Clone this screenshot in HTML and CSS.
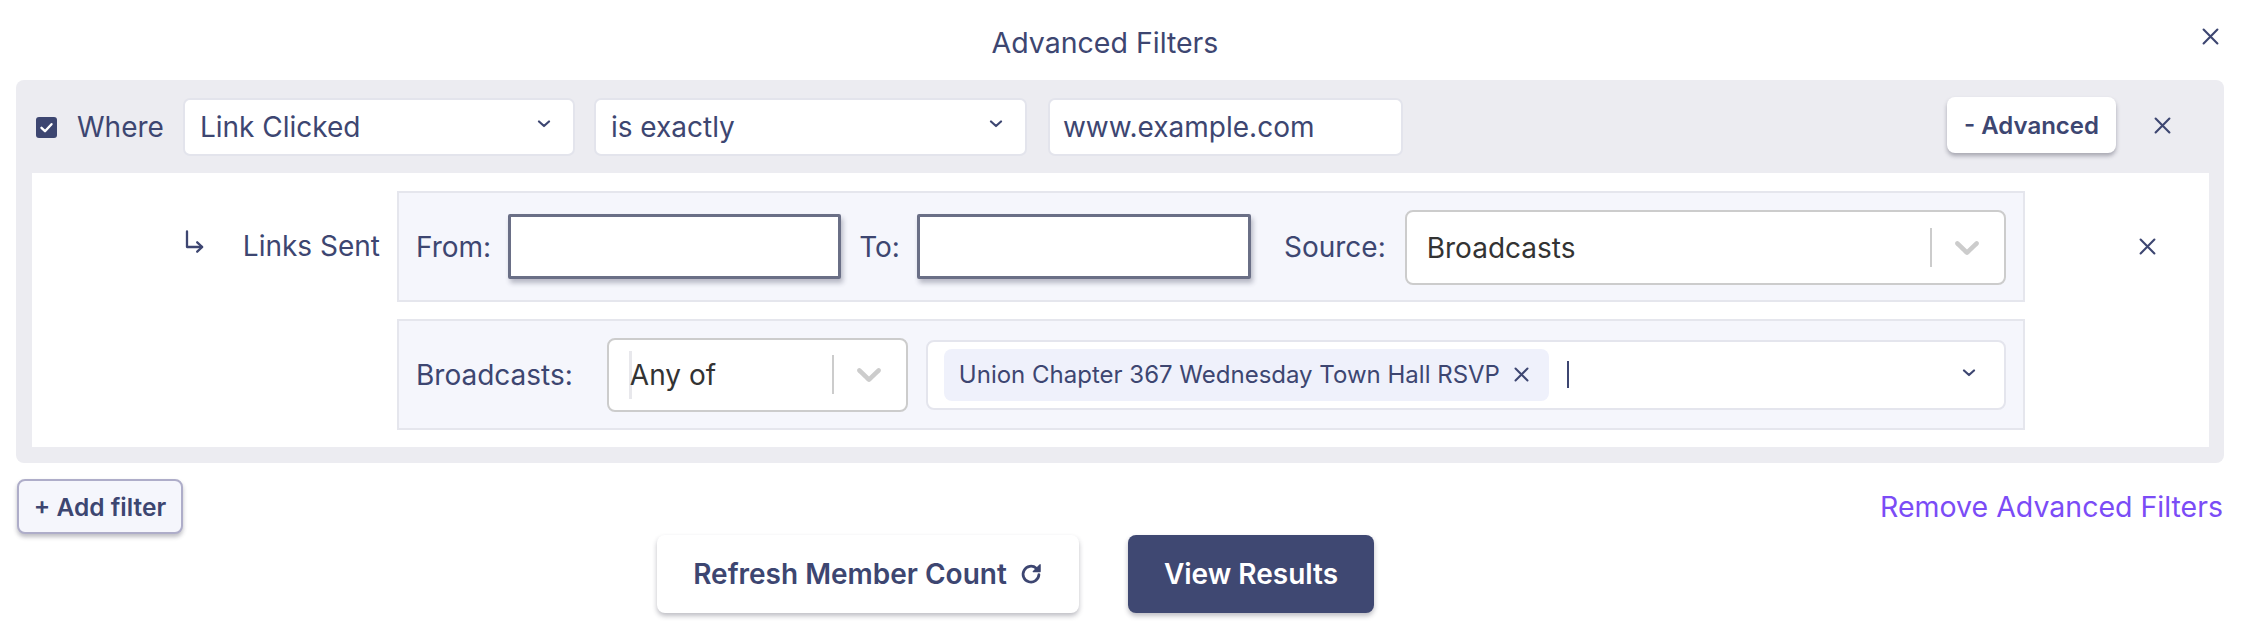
FILE: index.html
```html
<!DOCTYPE html>
<html lang="en">
<head>
<meta charset="utf-8">
<title>Advanced Filters</title>
<link rel="stylesheet" href="styles.css">
</head>
<body>
<div class="modal">
  <header class="header">
    <h1 class="title">Advanced Filters</h1>
    <button class="icon-btn close-top" aria-label="Close">
      <svg width="17" height="17" viewBox="0 0 16 16"><path d="M1.5 1.5L14.5 14.5M14.5 1.5L1.5 14.5" stroke="#3d4671" stroke-width="2" stroke-linecap="round"/></svg>
    </button>
  </header>

  <section class="panel">
    <div class="row-main">
      <span class="checkbox">
        <svg width="21" height="21" viewBox="0 0 21 21"><path d="M5.5 10.8L9 14.2L15.5 7.2" fill="none" stroke="#fff" stroke-width="2.4" stroke-linecap="round" stroke-linejoin="round"/></svg>
      </span>
      <span class="label">Where</span>
      <div class="select sel-field">
        <span>Link Clicked</span>
        <svg class="chev-sm" width="14" height="8" viewBox="0 0 14 8"><path d="M2 1.5L7 6L12 1.5" fill="none" stroke="#3d4671" stroke-width="2.2" stroke-linecap="round" stroke-linejoin="round"/></svg>
      </div>
      <div class="select sel-op">
        <span>is exactly</span>
        <svg class="chev-sm" width="14" height="8" viewBox="0 0 14 8"><path d="M2 1.5L7 6L12 1.5" fill="none" stroke="#3d4671" stroke-width="2.2" stroke-linecap="round" stroke-linejoin="round"/></svg>
      </div>
      <div class="text-input">www.example.com</div>
      <button class="btn-advanced">- Advanced</button>
      <button class="icon-btn close-row" aria-label="Remove filter">
        <svg width="17" height="17" viewBox="0 0 16 16"><path d="M1.5 1.5L14.5 14.5M14.5 1.5L1.5 14.5" stroke="#3d4671" stroke-width="2" stroke-linecap="round"/></svg>
      </button>
    </div>

    <div class="sub">
      <div class="sub-label">
        <svg class="arrow" width="22" height="24" viewBox="0 0 22 24"><path d="M3 1.5V17H18" fill="none" stroke="#3d4671" stroke-width="2.3" stroke-linecap="round" stroke-linejoin="round"/><path d="M13.2 12.3L18.2 17L13.2 21.7" fill="none" stroke="#3d4671" stroke-width="2.3" stroke-linecap="round" stroke-linejoin="round"/></svg>
        <span class="label">Links Sent</span>
      </div>
      <div class="sub-boxes">
        <div class="box">
          <span class="label">From:</span>
          <span class="date-input from"></span>
          <span class="label to-label">To:</span>
          <span class="date-input to"></span>
          <span class="label source-label">Source:</span>
          <div class="rs-select source">
            <span class="rs-value">Broadcasts</span>
            <span class="rs-sep"></span>
            <svg class="rs-chev" width="24" height="14" viewBox="4.3 7.2 11.4 6.8"><path d="M4.516 7.548c0.436-0.446 1.043-0.481 1.576 0l3.908 3.747 3.908-3.747c0.533-0.481 1.141-0.446 1.574 0 0.436 0.445 0.408 1.197 0 1.615-0.406 0.418-4.695 4.502-4.695 4.502-0.217 0.223-0.502 0.335-0.787 0.335s-0.57-0.112-0.789-0.335c0 0-4.287-4.084-4.695-4.502s-0.436-1.17 0-1.615z" fill="#cccccc"/></svg>
          </div>
        </div>
        <div class="box">
          <span class="label">Broadcasts:</span>
          <div class="rs-select anyof">
            <span class="rs-caret"></span>
            <span class="rs-value">Any of</span>
            <span class="rs-sep"></span>
            <svg class="rs-chev" width="24" height="14" viewBox="4.3 7.2 11.4 6.8"><path d="M4.516 7.548c0.436-0.446 1.043-0.481 1.576 0l3.908 3.747 3.908-3.747c0.533-0.481 1.141-0.446 1.574 0 0.436 0.445 0.408 1.197 0 1.615-0.406 0.418-4.695 4.502-4.695 4.502-0.217 0.223-0.502 0.335-0.787 0.335s-0.57-0.112-0.789-0.335c0 0-4.287-4.084-4.695-4.502s-0.436-1.17 0-1.615z" fill="#cccccc"/></svg>
          </div>
          <div class="multi">
            <span class="chip">
              <span class="chip-text">Union Chapter 367 Wednesday Town Hall RSVP</span>
              <svg width="15" height="15" viewBox="0 0 15 15"><path d="M1.5 1.5L13.5 13.5M13.5 1.5L1.5 13.5" stroke="#3d4671" stroke-width="2" stroke-linecap="round"/></svg>
            </span>
            <span class="cursor"></span>
            <svg class="multi-chev" width="14" height="8" viewBox="0 0 14 8"><path d="M2 1.5L7 6L12 1.5" fill="none" stroke="#3d4671" stroke-width="2.2" stroke-linecap="round" stroke-linejoin="round"/></svg>
          </div>
        </div>
      </div>
      <div class="sub-actions">
        <button class="icon-btn" aria-label="Remove advanced">
          <svg width="17" height="17" viewBox="0 0 16 16"><path d="M1.5 1.5L14.5 14.5M14.5 1.5L1.5 14.5" stroke="#3d4671" stroke-width="2" stroke-linecap="round"/></svg>
        </button>
      </div>
    </div>
  </section>

  <div class="below">
    <button class="btn-add">+ Add filter</button>
    <a class="remove-link" href="#">Remove Advanced Filters</a>
  </div>

  <div class="actions">
    <button class="btn-refresh">Refresh Member Count
      <svg width="24" height="24" viewBox="0 0 20 20"><path d="M16.6 10.6a6.6 6.6 0 1 1-2.2-5.4" fill="none" stroke="#3d4671" stroke-width="2.3" stroke-linecap="round"/><path d="M17.6 2.2v5.8h-5.8z" fill="#3d4671" stroke="#3d4671" stroke-width="1" stroke-linejoin="round"/></svg>
    </button>
    <button class="btn-view">View Results</button>
  </div>
</div>
</body>
</html>
```
FILE: styles.css
```css
* { box-sizing: border-box; }

html, body {
  margin: 0;
  padding: 0;
  background: #ffffff;
}

body {
  width: 2246px;
  height: 632px;
  overflow: hidden;
  font-family: Inter, "Noto Sans", "DejaVu Sans", sans-serif;
  color: #3d4671;
}

button {
  font-family: inherit;
  cursor: pointer;
}

.header {
  display: flex;
  align-items: center;
  height: 80px;
  padding: 0 27px 0 8px;
}

.title {
  flex: 1;
  margin: 0;
  text-align: center;
  font-size: 28.5px;
  font-weight: 400;
  color: #3d4671;
  padding-top: 4px;
}

.icon-btn {
  border: 0;
  background: transparent;
  padding: 0;
  display: flex;
  align-items: center;
  justify-content: center;
}

.close-top {
  width: 17px;
  height: 17px;
  margin-top: -8px;
}

.panel {
  margin: 0 22px 0 16px;
  padding: 18px 15px 16px 16px;
  background: #ececf1;
  border-radius: 8px;
}

.row-main {
  display: flex;
  align-items: center;
  height: 58px;
  padding-left: 4px;
  margin-bottom: 17px;
}

.checkbox {
  width: 21px;
  height: 21px;
  border-radius: 3px;
  background: #3d4671;
  display: flex;
  flex: none;
}

.label {
  font-size: 28px;
  color: #3d4671;
  white-space: nowrap;
}

.row-main .label {
  margin-left: 20px;
  margin-right: 19px;
}

.select,
.text-input {
  height: 58px;
  background: #ffffff;
  border: 2px solid #e3e4ec;
  border-radius: 7px;
  display: flex;
  align-items: center;
  font-size: 28px;
  color: #3d4671;
  flex: none;
}

.select {
  justify-content: space-between;
  padding: 0 22px 0 15px;
}

.sel-field { width: 392px; margin-right: 19px; }
.sel-op { width: 433px; margin-right: 21px; }

.chev-sm { margin-top: -6px; }

.text-input {
  width: 355px;
  padding: 0 13px;
}

.btn-advanced {
  margin-left: auto;
  width: 169px;
  height: 56px;
  border: 0;
  border-radius: 8px;
  background: #ffffff;
  box-shadow: 0 3px 4px rgba(40, 40, 60, 0.35);
  font-size: 24px;
  font-weight: 600;
  color: #3d4671;
  padding: 0;
  margin-top: -4px;
}

.close-row {
  width: 17px;
  height: 17px;
  margin-left: 38px;
  margin-right: 38px;
  margin-top: -4px;
}

.sub {
  display: flex;
  align-items: flex-start;
  background: #ffffff;
  padding: 18px 0 17px 0;
}

.sub-label {
  width: 365px;
  height: 110px;
  display: flex;
  align-items: center;
  justify-content: flex-end;
  padding-right: 17px;
  flex: none;
}

.arrow {
  margin-right: 37px;
  margin-top: -8px;
}

.sub-boxes {
  width: 1628px;
  display: flex;
  flex-direction: column;
  gap: 17px;
  flex: none;
}

.box {
  height: 111px;
  background: #f5f6fc;
  border: 2px solid #e5e6ed;
  display: flex;
  align-items: center;
  padding: 0 17px;
}

.date-input {
  height: 65px;
  background: #ffffff;
  border: 3px solid #6a6f86;
  border-radius: 2px;
  box-shadow: 2px 4px 5px rgba(40, 44, 70, 0.3);
  flex: none;
}

.date-input.from { width: 333px; margin-left: 17px; margin-right: 18px; }
.date-input.to { width: 334px; margin-left: 17px; margin-right: 33px; }

.rs-select {
  background: #ffffff;
  border: 2px solid #cccccc;
  border-radius: 8px;
  display: flex;
  align-items: center;
  padding: 0 25px 0 20px;
}

.rs-select.source {
  flex: 1;
  height: 75px;
  margin-left: 19px;
  margin-top: 2px;
}

.rs-select.anyof {
  width: 301px;
  height: 74px;
  margin-left: 34px;
  flex: none;
}

.rs-value {
  flex: 1;
  font-size: 28px;
  color: #333333;
}

.rs-caret {
  width: 3px;
  height: 48px;
  background: #e8e8ec;
  margin-right: -2px;
  flex: none;
}

.rs-sep {
  width: 2px;
  height: 39px;
  background: #cccccc;
  margin-right: 23px;
}

.multi {
  flex: 1;
  height: 70px;
  margin-left: 18px;
  background: #ffffff;
  border: 2px solid #e4e5ed;
  border-radius: 8px;
  display: flex;
  align-items: center;
  padding: 0 28px 0 16px;
}

.chip {
  display: flex;
  align-items: center;
  height: 52px;
  padding: 0 20px 0 15px;
  background: #eff1fb;
  border-radius: 8px;
  gap: 14px;
}

.chip-text {
  font-size: 24px;
  color: #3d4671;
  white-space: nowrap;
}

.cursor {
  width: 2px;
  height: 27px;
  background: #3d4671;
  margin-left: 18px;
}

.multi-chev { margin-left: auto; margin-top: -4px; }

.sub-actions {
  width: 184px;
  height: 110px;
  display: flex;
  align-items: center;
  padding-left: 114px;
  flex: none;
}

.below {
  display: flex;
  align-items: center;
  justify-content: space-between;
  margin-top: 16px;
  padding: 0 23px 0 17px;
}

.btn-add {
  width: 166px;
  height: 55px;
  background: #f5f6fc;
  border: 2px solid #aeadc9;
  border-radius: 8px;
  box-shadow: 0 3px 4px rgba(40, 40, 60, 0.3);
  font-size: 24.5px;
  font-weight: 600;
  color: #3d4671;
  padding: 0;
}

.remove-link {
  font-size: 28.5px;
  color: #7b4cf6;
  text-decoration: none;
}

.actions {
  display: flex;
  gap: 49px;
  padding-left: 657px;
  margin-top: 1px;
}

.btn-refresh,
.btn-view {
  height: 78px;
  border: 0;
  border-radius: 8px;
  box-shadow: 0 3px 5px rgba(40, 40, 60, 0.3);
  font-size: 28px;
  font-weight: 600;
  display: flex;
  align-items: center;
  justify-content: center;
  padding: 0;
}

.btn-refresh {
  width: 422px;
  background: #ffffff;
  color: #3d4671;
  gap: 12px;
}

.btn-view {
  width: 246px;
  background: #3f4872;
  color: #ffffff;
}
```
